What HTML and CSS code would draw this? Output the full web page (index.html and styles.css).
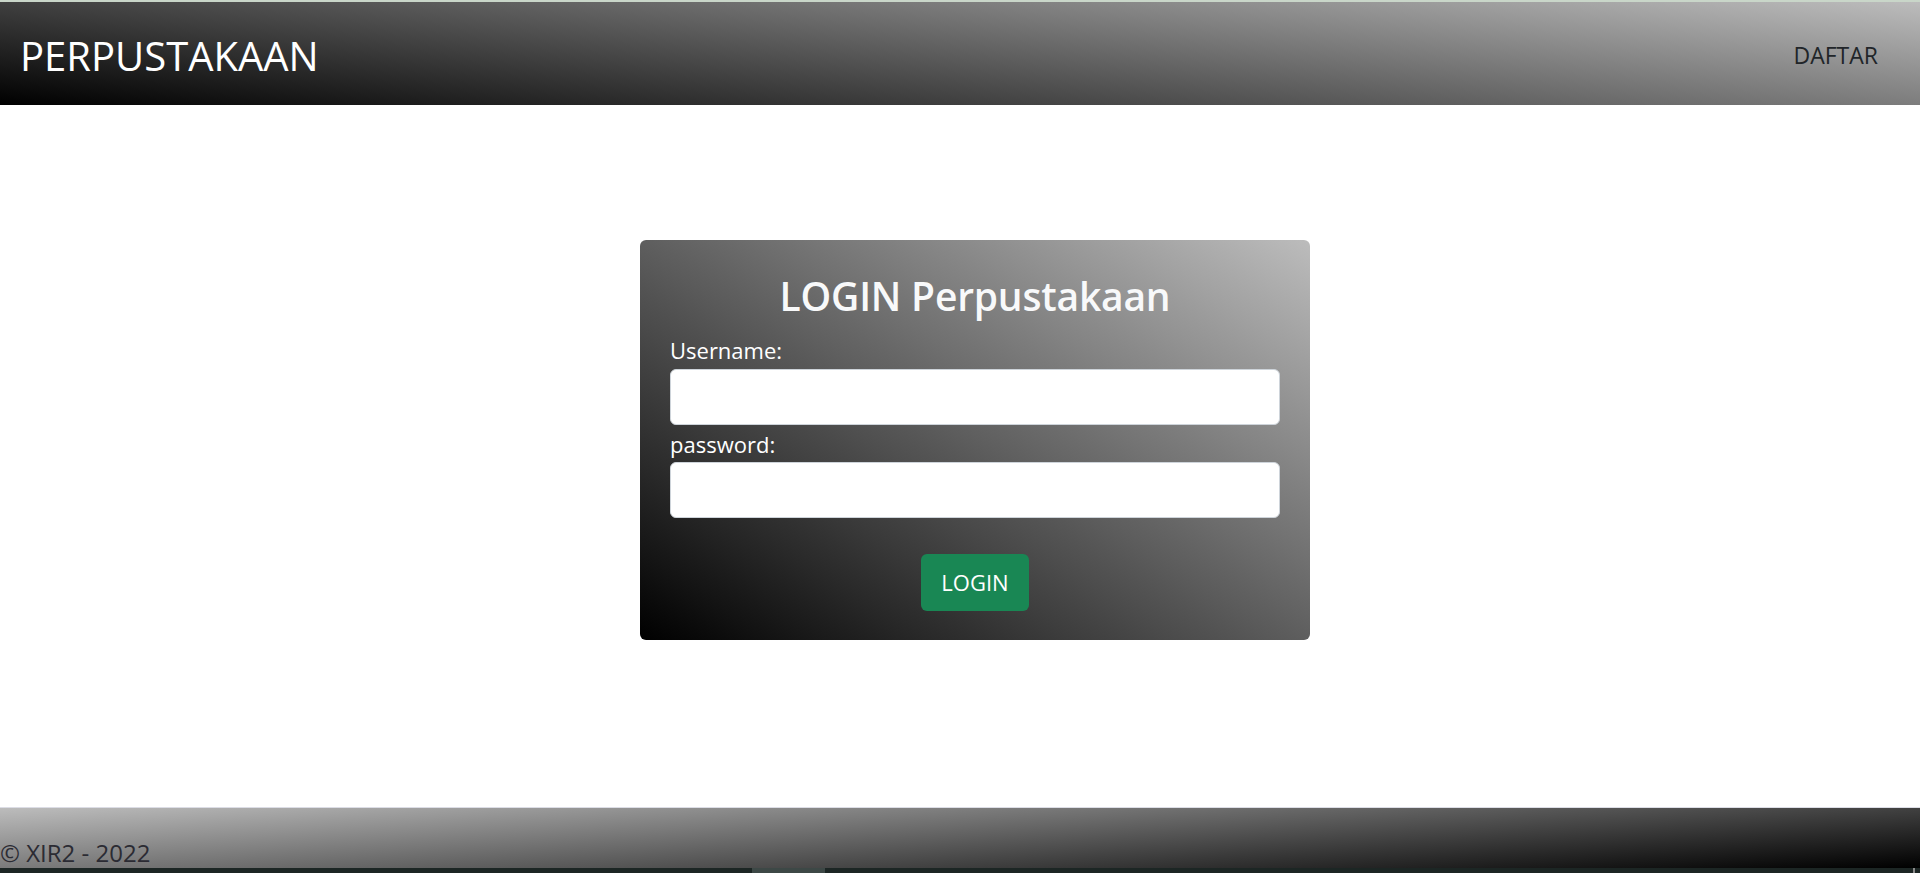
FILE: index.html
```html
<!DOCTYPE html>
<html lang="id">
<head>
<meta charset="utf-8">
<title>Login Perpustakaan</title>
<link rel="stylesheet" href="styles.css">
</head>
<body>
<div class="page">
  <div class="top-strip"></div>
  <nav class="navbar">
    <a class="brand" href="#">PERPUSTAKAAN</a>
    <a class="nav-link" href="#">DAFTAR</a>
  </nav>
  <main class="main">
    <form class="card">
      <h1 class="card-title">LOGIN Perpustakaan</h1>
      <label class="label label-user" for="username">Username:</label>
      <input class="input input-user" id="username" type="text">
      <label class="label label-pass" for="password">password:</label>
      <input class="input input-pass" id="password" type="password">
      <div class="actions">
        <button class="btn" type="button">LOGIN</button>
      </div>
    </form>
  </main>
  <footer class="footer">
    <p class="copy">© XIR2 - 2022</p>
  </footer>
  <div class="taskbar">
    <span class="seg seg-a"></span>
    <span class="seg seg-b"></span>
    <span class="seg seg-c"></span>
    <span class="seg seg-tick"></span>
    <span class="seg seg-d"></span>
  </div>
</div>
</body>
</html>
```
FILE: styles.css
```css
* { box-sizing: border-box; }

html, body {
  margin: 0;
  padding: 0;
  height: 100%;
}

body {
  font-family: "Open Sans", "Noto Sans", "Liberation Sans", sans-serif;
  color: #212529;
  background: #ffffff;
  overflow: hidden;
}

.page {
  height: 873px;
  display: flex;
  flex-direction: column;
}

.top-strip {
  height: 2px;
  background: #c9d6c9;
  flex: none;
}

.navbar {
  flex: none;
  height: 103px;
  padding: 4px 42px 0 20px;
  display: flex;
  align-items: center;
  justify-content: space-between;
  background: linear-gradient(6deg, #000000, #bcbcbc);
}

.brand {
  font-size: 40px;
  line-height: 60px;
  color: #ffffff;
  text-decoration: none;
  font-weight: 400;
}

.nav-link {
  font-size: 23px;
  line-height: 33px;
  color: #212529;
  text-decoration: none;
}

.main {
  flex: 1;
  display: flex;
  justify-content: center;
  align-items: flex-start;
  padding: 135px 0 0 30px;
}

.card {
  width: 670px;
  height: 400px;
  padding: 32px 30px 29px;
  border-radius: 6px;
  background: linear-gradient(to top right, #000000, #bcbcbc);
  display: flex;
  flex-direction: column;
  margin: 0;
}

.card-title {
  margin: 0;
  font-size: 39px;
  line-height: 48px;
  font-weight: 600;
  letter-spacing: -0.2px;
  color: #f8f9fa;
  text-align: center;
}

.label {
  display: block;
  font-size: 22px;
  line-height: 33px;
  color: #ffffff;
}

.label-user { margin-top: 14px; }
.label-pass { margin-top: 3px; }

.input {
  display: block;
  width: 100%;
  height: 56px;
  border: 1px solid #ced4da;
  border-radius: 6px;
  background: #ffffff;
  font-family: inherit;
  font-size: 20px;
  padding: 8px 16px;
  outline: none;
}

.input-user { margin-top: 2px; }
.input-pass { margin-top: 1px; }

.actions {
  margin-top: 36px;
  display: flex;
  justify-content: center;
}

.btn {
  width: 108px;
  height: 57px;
  border: none;
  border-radius: 6px;
  background: #198754;
  color: #ffffff;
  font-family: inherit;
  font-size: 22px;
  line-height: 33px;
  padding: 0;
  cursor: pointer;
}

.footer {
  flex: none;
  height: 61px;
  border-top: 1px solid #dcdde5;
  background: linear-gradient(176.6deg, #bcbcbc, #000000);
  overflow: hidden;
}

.copy {
  margin: 0;
  padding-top: 28px;
  font-size: 24px;
  line-height: 33px;
  color: #2b2b33;
}

.taskbar {
  flex: none;
  height: 5px;
  display: flex;
  background: #1c2624;
}

.seg { display: block; height: 100%; }
.seg-a { width: 752px; background: #1c2624; }
.seg-b { width: 73px; background: #3d4846; }
.seg-c { flex: 1; background: #1c2624; }
.seg-tick { width: 2px; background: #8a8a8a; }
.seg-d { width: 5px; background: #1c2624; }
```
